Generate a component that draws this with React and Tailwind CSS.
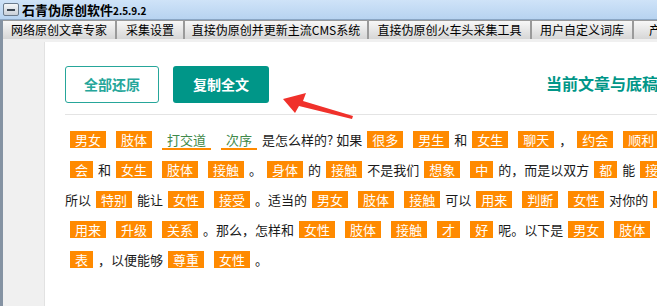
import React from 'react';

const tabs = [
  { label: '网络原创文章专家', w: 'w-[114px]' },
  { label: '采集设置', w: 'w-[68px]' },
  { label: '直接伪原创并更新主流CMS系统', w: 'w-[184px]' },
  { label: '直接伪原创火车头采集工具', w: 'w-[163px]' },
  { label: '用户自定义词库', w: 'w-[102px]' },
  { label: '产品说明', w: 'w-[80px]' },
];

// t: tag, u: underlined word, s: plain text
const lines = [
  [['t', '男女'], ['t', '肢体'], ['u', '打交道'], ['u', '次序'], ['s', '是怎么样的? 如果'], ['t', '很多'], ['t', '男生'], ['s', '和'], ['t', '女生'], ['t', '聊天'], ['s', '，'], ['t', '约会'], ['t', '顺利']],
  [['t', '会'], ['s', '和'], ['t', '女生'], ['t', '肢体'], ['t', '接触'], ['s', '。'], ['t', '身体'], ['s', '的'], ['t', '接触'], ['s', '不是我们'], ['t', '想象'], ['t', '中'], ['s', '的，而是以双方'], ['t', '都'], ['s', '能'], ['t', '接受']],
  [['s', '所以'], ['t', '特别'], ['s', '能让'], ['t', '女性'], ['t', '接受'], ['s', '。适当的'], ['t', '男女'], ['t', '肢体'], ['t', '接触'], ['s', '可以'], ['t', '用来'], ['t', '判断'], ['t', '女性'], ['s', '对你的'], ['t', '好感']],
  [['t', '用来'], ['t', '升级'], ['t', '关系'], ['s', '。那么，怎样和'], ['t', '女性'], ['t', '肢体'], ['t', '接触'], ['t', '才'], ['t', '好'], ['s', '呢。以下是'], ['t', '男女'], ['t', '肢体'], ['t', '接触']],
  [['t', '表'], ['s', '，以便能够'], ['t', '尊重'], ['t', '女性'], ['s', '。']],
];

const Word = ({ kind, text }) => {
  if (kind === 't') {
    return <span className="inline-block mx-[5px] px-[5px] leading-[17px] bg-[#ff8a00] text-white">{text}</span>;
  }
  if (kind === 'u') {
    return <span className="inline-block mx-[5px] px-[5px] leading-[17px] border-b-2 border-[#ff8a00] text-[#3f8a4a]">{text}</span>;
  }
  return <span>{text}</span>;
};

const App = () => {
  return (
    <div className="relative w-[657px] h-[306px] overflow-hidden bg-[#f0f0f0] font-['Noto_Sans_CJK_SC',sans-serif] flex flex-col">
      {/* title bar */}
      <div className="h-[20px] shrink-0 flex items-center bg-gradient-to-b from-[#cfe3f8] to-[#b7d3f0] border-b border-[#8aa6c4]">
        <div className="ml-[3px] w-[16px] h-[13px] rounded-[2px] border border-[#6b7b8c] bg-gradient-to-b from-[#f4f6f8] to-[#c9d0d8] flex items-center justify-center">
          <div className="w-[8px] h-[2px] bg-[#3a4450]"></div>
        </div>
        <span className="ml-[3px] text-[13px] font-bold text-black leading-none">石青伪原创软件</span>
        <span className="text-[10px] font-bold text-black leading-none mt-[2px]">2.5.9.2</span>
      </div>

      <div className="flex-1 flex flex-col border-l-[3px] border-[#8593a3] min-h-0">
        {/* tabs */}
        <div className="h-[19px] shrink-0 flex whitespace-nowrap bg-[#f0f0f0]">
          {tabs.map((t) => (
            <div
              key={t.label}
              className={`${t.w} shrink-0 h-full flex items-center justify-center text-[12px] text-black border-t border-r-2 border-[#9a9a9a] bg-gradient-to-b from-[#f7f7f7] to-[#d6d6d6]`}
            >
              {t.label}
            </div>
          ))}
        </div>

        {/* content */}
        <div className="flex-1 min-h-0 pl-[41px] pt-[3px] bg-[#f0f0f0]">
          <div className="h-full bg-white border-l border-[#e2e2e2] pl-[20px] pt-[24px] whitespace-nowrap">
            <div className="flex items-center h-[37px]">
              <button className="shrink-0 w-[94px] h-[37px] rounded-[3px] border border-[#26a69a] text-[#26a69a] text-[14px] font-bold bg-white">
                全部还原
              </button>
              <button className="shrink-0 ml-[14px] w-[96px] h-[37px] rounded-[3px] bg-[#009688] text-white text-[14px] font-bold">
                复制全文
              </button>
              <span className="shrink-0 ml-[277px] text-[16px] font-bold text-[#009688] mt-[-4px]">当前文章与底稿相似度</span>
            </div>
            <div className="mt-[11px] h-px bg-[#e4e4e4]"></div>
            <div className="pt-[10px] text-[13px] text-[#1a1a1a] leading-[30px]">
              {lines.map((line, i) => (
                <div key={i} className="h-[30px] whitespace-nowrap">
                  {line.map(([k, txt], j) => (
                    <Word key={j} kind={k} text={txt} />
                  ))}
                </div>
              ))}
            </div>
          </div>
        </div>
      </div>

      {/* annotation arrow */}
      <svg className="absolute left-[280px] top-[88px]" width="76" height="34" viewBox="0 0 76 34">
        <polygon points="3,11 26,5 23,13 73,28 72,31 19,18 15,25" fill="#f0312b" />
      </svg>
    </div>
  );
};

export default App;
